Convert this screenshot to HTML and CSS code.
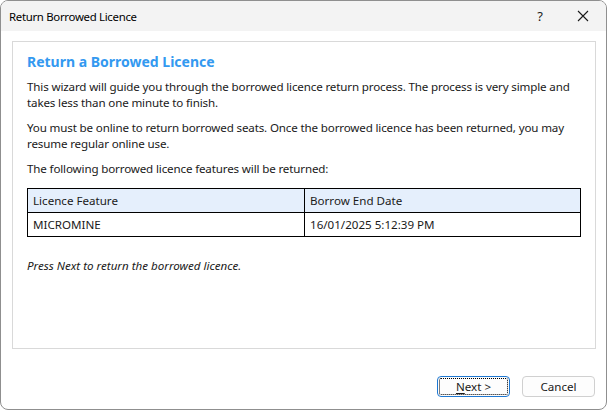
FILE: index.html
```html
<!DOCTYPE html>
<html>
<head>
<meta charset="utf-8">
<link rel="stylesheet" href="styles.css">
</head>
<body>
<div class="window">
  <div class="titlebar">
    <span class="title">Return Borrowed Licence</span>
    <span class="tb-btn help">?</span>
    <span class="tb-btn close">
      <svg width="12" height="12" viewBox="0 0 12 12"><path d="M1 1 L11 11 M11 1 L1 11" stroke="#1a1a1a" stroke-width="1.1" fill="none"/></svg>
    </span>
  </div>
  <div class="client">
    <div class="panel">
      <h1 class="heading">Return a Borrowed Licence</h1>
      <p class="para">This wizard will guide you through the borrowed licence return process. The process is very simple and takes less than one minute to finish.</p>
      <p class="para">You must be online to return borrowed seats. Once the borrowed licence has been returned, you may resume regular online use.</p>
      <p class="para">The following borrowed licence features will be returned:</p>
      <table class="grid">
        <tr class="head"><td class="c1">Licence Feature</td><td class="c2">Borrow End Date</td></tr>
        <tr><td class="c1">MICROMINE</td><td class="c2">16/01/2025 5:12:39 PM</td></tr>
      </table>
      <p class="note">Press Next to return the borrowed licence.</p>
    </div>
    <div class="buttons">
      <button class="btn primary"><span class="focus"><u>N</u>ext &gt;</span></button>
      <button class="btn">Cancel</button>
    </div>
  </div>
</div>
</body>
</html>
```
FILE: styles.css
```css
html, body {
  margin: 0;
  padding: 0;
  background: #ffffff;
}
body {
  font-family: "Noto Sans", "Open Sans", sans-serif;
  font-size: 12px;
  color: #1a1a1a;
}
.window {
  box-sizing: border-box;
  width: 607px;
  height: 410px;
  border: 1px solid #8f8f8f;
  border-radius: 8px;
  overflow: hidden;
  background: #ffffff;
  display: flex;
  flex-direction: column;
}
.titlebar {
  height: 30px;
  background: #f3f3f3;
  display: flex;
  align-items: center;
  flex-shrink: 0;
}
.title {
  margin-left: 8px;
  flex: 1;
  font-size: 11.4px;
  letter-spacing: -0.3px;
  color: #000;
}
.tb-btn {
  display: flex;
  align-items: center;
  justify-content: center;
  color: #1a1a1a;
}
.help {
  width: 14px;
  font-size: 13px;
  margin-right: 30px;
}
.close {
  width: 12px;
  margin-right: 17px;
}
.client {
  flex: 1;
  display: flex;
  flex-direction: column;
  padding: 10px 10px 0 11px;
}
.panel {
  box-sizing: border-box;
  height: 308px;
  width: 584px;
  border: 1px solid #d9d9d9;
  padding: 10px 14px 0 14px;
}
.heading {
  margin: 0 0 7px 0;
  font-size: 14px;
  font-weight: bold;
  color: #3399f0;
  line-height: 20px;
}
.para {
  margin: 0 0 9px 0;
  line-height: 16px;
  font-size: 11.6px;
  letter-spacing: -0.15px;
}
.grid {
  width: 554px;
  border-collapse: collapse;
  margin-top: 11px;
  font-size: 11.6px;
}
.grid td {
  border: 1px solid #000;
  height: 23px;
  padding: 0 5px;
  line-height: 16px;
}
.grid .head td {
  background: #e5effc;
}
.grid .c1 {
  width: 266px;
}
.note {
  margin: 21px 0 0 0;
  font-style: italic;
  font-size: 11.6px;
  line-height: 16px;
}
.buttons {
  display: flex;
  justify-content: flex-end;
  gap: 12px;
  margin-top: 27px;
  margin-right: 1px;
}
.btn {
  box-sizing: border-box;
  width: 73px;
  height: 21px;
  border: 1px solid #d0d0d0;
  border-radius: 4px;
  background: #fdfdfd;
  font-family: "Noto Sans", "Open Sans", sans-serif;
  font-size: 11.6px;
  color: #1a1a1a;
  padding: 0;
  display: flex;
  align-items: center;
  justify-content: center;
}
.btn.primary {
  border: 1px solid #1e78d2;
  padding: 1px;
}
.focus {
  box-sizing: border-box;
  width: 100%;
  height: 100%;
  border: 1px dotted #000;
  border-radius: 2px;
  display: flex;
  align-items: center;
  justify-content: center;
}
.focus u {
  text-decoration-thickness: 1px;
  text-underline-offset: 2px;
}
```
